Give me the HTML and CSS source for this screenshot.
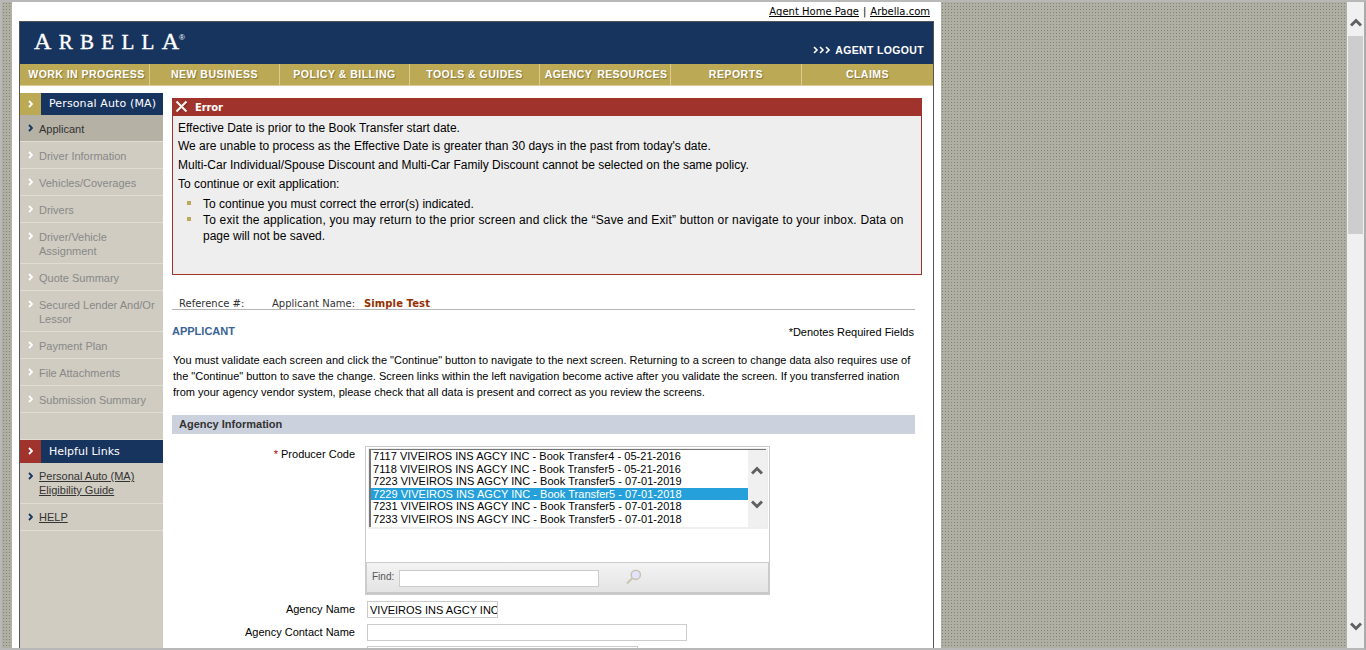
FILE: index.html
```html
<!DOCTYPE html>
<html lang="en">
<head>
<meta charset="utf-8">
<title>Arbella - Applicant</title>
<link rel="stylesheet" href="styles.css">
</head>
<body>
<svg class="defs" width="0" height="0"><symbol id="chev" viewBox="0 0 5 8"><path d="M1 1l3 3-3 3" fill="none" stroke="currentColor" stroke-width="1.8"/></symbol>
<symbol id="up" viewBox="0 0 12 9"><path d="M1 7.5l5-5 5 5" fill="none" stroke="#606060" stroke-width="3"/></symbol></svg>
<div class="window">
  <div class="canvas">
    <div class="page">
      <div class="toplinks"><a>Agent Home Page</a><span>|</span><a>Arbella.com</a></div>
      <div class="shell">
        <header class="header">
          <div class="logo"><span class="cap">A</span>RBELL<span class="cap last">A</span><span class="reg">®</span></div>
          <div class="logout"><svg width="17" height="8" viewBox="0 0 17 8"><path d="M1 1l3 3-3 3M7 1l3 3-3 3M13 1l3 3-3 3" fill="none" stroke="#fff" stroke-width="1.6"/></svg><span>AGENT LOGOUT</span></div>
        </header>
        <nav class="nav"><a class="n1">WORK IN PROGRESS</a><a class="n2">NEW BUSINESS</a><a class="n3">POLICY &amp; BILLING</a><a class="n4">TOOLS &amp; GUIDES</a><a class="n5">AGENCY RESOURCES</a><a class="n6">REPORTS</a><a class="n7">CLAIMS</a></nav>
        <div class="body">
          <aside class="side">
            <div class="head"><i class="gold"><svg class="chev"><use href="#chev"/></svg></i><span class="h1">Personal Auto (MA)</span></div>
            <div class="item active"><svg class="chev"><use href="#chev"/></svg><span>Applicant</span></div>
            <div class="item"><svg class="chev"><use href="#chev"/></svg><span>Driver Information</span></div>
            <div class="item"><svg class="chev"><use href="#chev"/></svg><span>Vehicles/Coverages</span></div>
            <div class="item"><svg class="chev"><use href="#chev"/></svg><span>Drivers</span></div>
            <div class="item"><svg class="chev"><use href="#chev"/></svg><span>Driver/Vehicle<br>Assignment</span></div>
            <div class="item"><svg class="chev"><use href="#chev"/></svg><span>Quote Summary</span></div>
            <div class="item"><svg class="chev"><use href="#chev"/></svg><span>Secured Lender And/Or<br>Lessor</span></div>
            <div class="item"><svg class="chev"><use href="#chev"/></svg><span>Payment Plan</span></div>
            <div class="item"><svg class="chev"><use href="#chev"/></svg><span>File Attachments</span></div>
            <div class="item"><svg class="chev"><use href="#chev"/></svg><span>Submission Summary</span></div>
            <div class="item blank"></div>
            <div class="head help"><i class="red"><svg class="chev"><use href="#chev"/></svg></i><span class="h2">Helpful Links</span></div>
            <div class="item link"><svg class="chev"><use href="#chev"/></svg><span>Personal Auto (MA)<br>Eligibility Guide</span></div>
            <div class="item link"><svg class="chev"><use href="#chev"/></svg><span>HELP</span></div>
          </aside>
          <main class="main">
            <section class="error">
              <div class="errhead"><svg width="13" height="13" viewBox="0 0 13 13"><path d="M2 2l9 9M11 2l-9 9" stroke="#5f1d18" stroke-opacity=".6" stroke-width="3" transform="translate(.7 .7)"/><path d="M1.5 1.5l10 10M11.5 1.5l-10 10" stroke="#f4f0ee" stroke-width="2.2"/></svg><b>Error</b></div>
              <div class="errbody">
                <p class="e1">Effective Date is prior to the Book Transfer start date.</p>
                <p class="e2">We are unable to process as the Effective Date is greater than 30 days in the past from today's date.</p>
                <p class="e3">Multi-Car Individual/Spouse Discount and Multi-Car Family Discount cannot be selected on the same policy.</p>
                <p class="e4">To continue or exit application:</p>
                <ul>
                  <li>To continue you must correct the error(s) indicated.</li>
                  <li><span class="wide">To exit the application, you may return to the prior screen and click the “Save and Exit” button or navigate to your inbox. Data on</span><br>page will not be saved.</li>
                </ul>
              </div>
            </section>
            <div class="ref"><span class="r1">Reference #:</span><span class="r2">Applicant Name:</span><b>Simple Test</b></div>
            <div class="title"><h1>APPLICANT</h1><span>*Denotes Required Fields</span></div>
            <p class="intro"><span class="i1">You must validate each screen and click the "Continue" button to navigate to the next screen. Returning to a screen to change data also requires use of</span><br><span class="i2">the "Continue" button to save the change. Screen links within the left navigation become active after you validate the screen. If you transferred ination</span><br><span class="i3">from your agency vendor system, please check that all data is present and correct as you review the screens.</span></p>
            <h2 class="bar">Agency Information</h2>
            <div class="row producer">
              <label><span class="star">*</span> Producer Code</label>
              <div class="picker">
                <div class="list">
                  <div class="opts">
                    <div>7117 VIVEIROS INS AGCY INC - Book Transfer4 - 05-21-2016</div>
                    <div>7118 VIVEIROS INS AGCY INC - Book Transfer5 - 05-21-2016</div>
                    <div>7223 VIVEIROS INS AGCY INC - Book Transfer5 - 07-01-2019</div>
                    <div class="sel">7229 VIVEIROS INS AGCY INC - Book Transfer5 - 07-01-2018</div>
                    <div>7231 VIVEIROS INS AGCY INC - Book Transfer5 - 07-01-2018</div>
                    <div>7233 VIVEIROS INS AGCY INC - Book Transfer5 - 07-01-2018</div>
                  </div>
                  <div class="lscroll"><svg class="arr"><use href="#up"/></svg><svg class="arr down"><use href="#up"/></svg></div>
                </div>
                <div class="find"><span>Find:</span><div class="field ffind"></div><svg width="16" height="16" viewBox="0 0 16 16"><path d="M1 14.5L6.5 9" stroke="#c9c3b4" stroke-width="2"/><circle cx="9.8" cy="5.8" r="4.6" fill="#e2e2fa" stroke="#c9c3b0" stroke-width="1.5"/></svg></div>
              </div>
            </div>
            <div class="row r-name"><label>Agency Name</label><div class="field f1"><span>VIVEIROS INS AGCY INC</span></div></div>
            <div class="row r-contact"><label>Agency Contact Name</label><div class="field f2"></div></div>
            <div class="row r-next"><label></label><div class="field f3"></div></div>
          </main>
        </div>
      </div>
    </div>
  </div>
  <div class="scroll"><svg class="arr"><use href="#up"/></svg><div class="thumb"></div><svg class="arr down"><use href="#up"/></svg></div>
</div>
</body>
</html>
```
FILE: styles.css
```css
* { box-sizing: border-box; }
body { margin: 0; font-family: "Liberation Sans", Arial, sans-serif; color: #000; }
h1, h2, p, ul { margin: 0; padding: 0; }
.defs { display: block; position: absolute; }
.window { width: 1366px; height: 650px; border: 2px solid #b8b8b8; border-right-color: #ababab; display: flex; overflow: hidden; }
.canvas { flex: 1; height: 646px; padding-left: 10px; background: #b0afa4 radial-gradient(circle at 1.5px 1.5px, #82837b .7px, transparent .8px) 0 0 / 3px 3px; overflow: hidden; }
.page { width: 929px; height: 646px; background: #fff; padding: 0 7px; overflow: hidden; }
.toplinks { height: 19px; display: flex; justify-content: flex-end; gap: 4px; padding: 3px 4px 0 0; font: 10px/14px "DejaVu Sans", Verdana, sans-serif; }
.toplinks a { border-bottom: 1px solid #000; height: 12px; }
.shell { width: 915px; border: 1px solid #555; border-bottom: 0; }
.header { height: 42px; background: #17345f; display: flex; justify-content: space-between; padding: 0 9px 0 14px; color: #fff; }
.logo { display: flex; font: 21px/40px "Liberation Serif", serif; letter-spacing: 7.3px; white-space: nowrap; -webkit-text-stroke: .4px #fff; }
.logo .cap { font-size: 24px; line-height: 38px; }
.logo .last { letter-spacing: 0; }
.logo .reg { font: 8px/31px "Liberation Sans", sans-serif; letter-spacing: 0; -webkit-text-stroke: 0; }
.logout { display: flex; gap: 5px; align-items: center; padding-top: 14px; font: bold 10.5px/12px "Liberation Sans", sans-serif; letter-spacing: .35px; }
.nav { height: 22px; display: flex; background: #bba955; border-bottom: 1px solid #dccb98; font: bold 10.5px/21px "Liberation Sans", sans-serif; color: #fff; text-shadow: 1px 1px 1px #85763a; letter-spacing: .5px; }
.nav a { width: 130px; text-align: center; border-right: 1px solid #dccb8e; white-space: nowrap; }
.nav .n1 { padding-left: 4px; letter-spacing: .46px; }
.nav .n5 { padding-left: 2px; letter-spacing: .4px; word-spacing: 2px; }
.nav .n5, .nav .n6 { width: 131px; }
.nav .n7 { flex: 1; border: 0; }
.body { display: flex; padding-top: 7px; }
.side { width: 143px; height: 560px; background: #d0ccc1; }
.head { display: flex; height: 22px; background: #17345f; color: #fff; font: 11px/22px "DejaVu Sans", Verdana, sans-serif; white-space: nowrap; }
.head i { width: 21px; padding: 7px 0 0 8px; line-height: 0; }
.head span { padding-left: 8px; }
.head .h1 { letter-spacing: .12px; }
.head.help { height: 23px; line-height: 23px; }
.gold { background: #bba955; }
.red { background: #a0342c; }
.chev { width: 5px; height: 8px; display: block; flex: none; }
.item { display: flex; border-bottom: 1px solid #e0ddd5; padding: 7px 0 5px 9px; color: #888; font-size: 11px; line-height: 14px; white-space: nowrap; gap: 5px; }
.item .chev { color: #fff; margin-top: 2px; margin-left: -1px; margin-right: 1px; }
.active { background: #b5b1a5; color: #333; }
.item.active .chev, .link .chev { color: #17345f; }
.item.link .chev { color: #17345f; margin-top: 3px; }
.blank { height: 27px; }
.link { padding: 6px 0 6px 9px; color: #333; }
.link span { text-decoration: underline; }
.main { padding: 5px 0 0 9px; width: 770px; }
.error { width: 750px; height: 177px; border: 1px solid #a0342c; background: #eee; font-size: 12px; }
.errhead { height: 17px; background: #a0342c; color: #fff; display: flex; padding: 1px 0 0 2px; gap: 7px; font: bold 10px/16px "DejaVu Sans", Verdana, sans-serif; letter-spacing: -.15px; }
.errbody { padding: 3px 0 0 5px; white-space: nowrap; }
.errbody p { height: 19px; line-height: 18px; }
.errbody .e1 { height: 18px; }
.errbody ul { list-style: none; padding: 2px 0 0 25px; line-height: 16px; }
.errbody li::before { content: ""; float: left; width: 4px; height: 4px; margin: 5px 0 0 -16px; background: #bba955; }
.wide { letter-spacing: .175px; }
.ref { margin-top: 22px; width: 743px; height: 13px; border-bottom: 1px solid #b5b5b5; padding-left: 7px; display: flex; font: 10px/13px "DejaVu Sans", Verdana, sans-serif; color: #333; white-space: nowrap; }
.ref .r1 { width: 93px; }
.ref .r2 { width: 92px; }
.ref b { color: #932f00; letter-spacing: .1px; }
.title { width: 743px; display: flex; justify-content: space-between; padding: 14px 1px 0 0; font-size: 11px; line-height: 16px; }
.title h1 { font-size: 11px; line-height: 14px; color: #3a6296; }
.intro { margin: 12px 0 0 1px; font-size: 11px; line-height: 16px; white-space: nowrap; }
.i1 { letter-spacing: .01px; }
.bar { margin-top: 15px; width: 743px; height: 19px; background: #ccd2dd; padding-left: 7px; font-size: 11px; line-height: 19px; color: #333; }
.row { display: flex; gap: 12px; font-size: 11px; }
.row label { width: 183px; text-align: right; white-space: nowrap; line-height: 16px; }
.star { color: #a00; }
.producer { margin-top: 12px; gap: 10px; }
.picker { width: 405px; height: 149px; border: 1px solid #ccc; display: flex; flex-direction: column; justify-content: space-between; }
.list { margin: 1px 0 0 2px; width: 400px; height: 81px; display: flex; border: 1px solid #eee; border-width: 1px 2px 2px 1px; }
.opts { flex: 1; border-top: 1px solid #777; border-left: 2px solid #777; white-space: nowrap; font-size: 11px; line-height: 12.6px; letter-spacing: .035px; }
.opts div { padding-left: 2px; height: 12.6px; }
.sel { background: #26a0da; color: #fff; }
.lscroll { width: 18px; background: #f0f0f0; border-top: 1px solid #777; padding: 16px 0 18px 3px; display: flex; flex-direction: column; justify-content: space-between; }
.arr { width: 12px; height: 9px; display: block; }
.down { transform: rotate(180deg); }
.find { height: 32px; border: 1px solid #ccc; border-bottom: 2px solid #c8c8c8; background: linear-gradient(#f3f3f3, #e4e4e4); display: flex; padding: 7px 0 0 5px; font-size: 10px; line-height: 14px; color: #555; }
.find span { width: 27px; }
.find svg { margin: -1px 0 0 27px; }
.field { height: 17px; border: 1px solid #ccc; background: #fff; overflow: hidden; white-space: nowrap; }
.ffind { width: 200px; }
.r-name { margin-top: 6px; }
.f1 { width: 131px; line-height: 16px; padding-left: 2px; }
.r-contact { margin-top: 6px; height: 22px; }
.f2 { width: 320px; }
.f3 { width: 271px; }
.scroll { width: 17px; background: #f0f0f0; padding: 16px 1px 17px; display: flex; flex-direction: column; }
.scroll .arr { flex: none; margin-left: 2px; }
.thumb { width: 15px; height: 198px; background: #cdcdcd; margin: 9px 0 auto; }
```
